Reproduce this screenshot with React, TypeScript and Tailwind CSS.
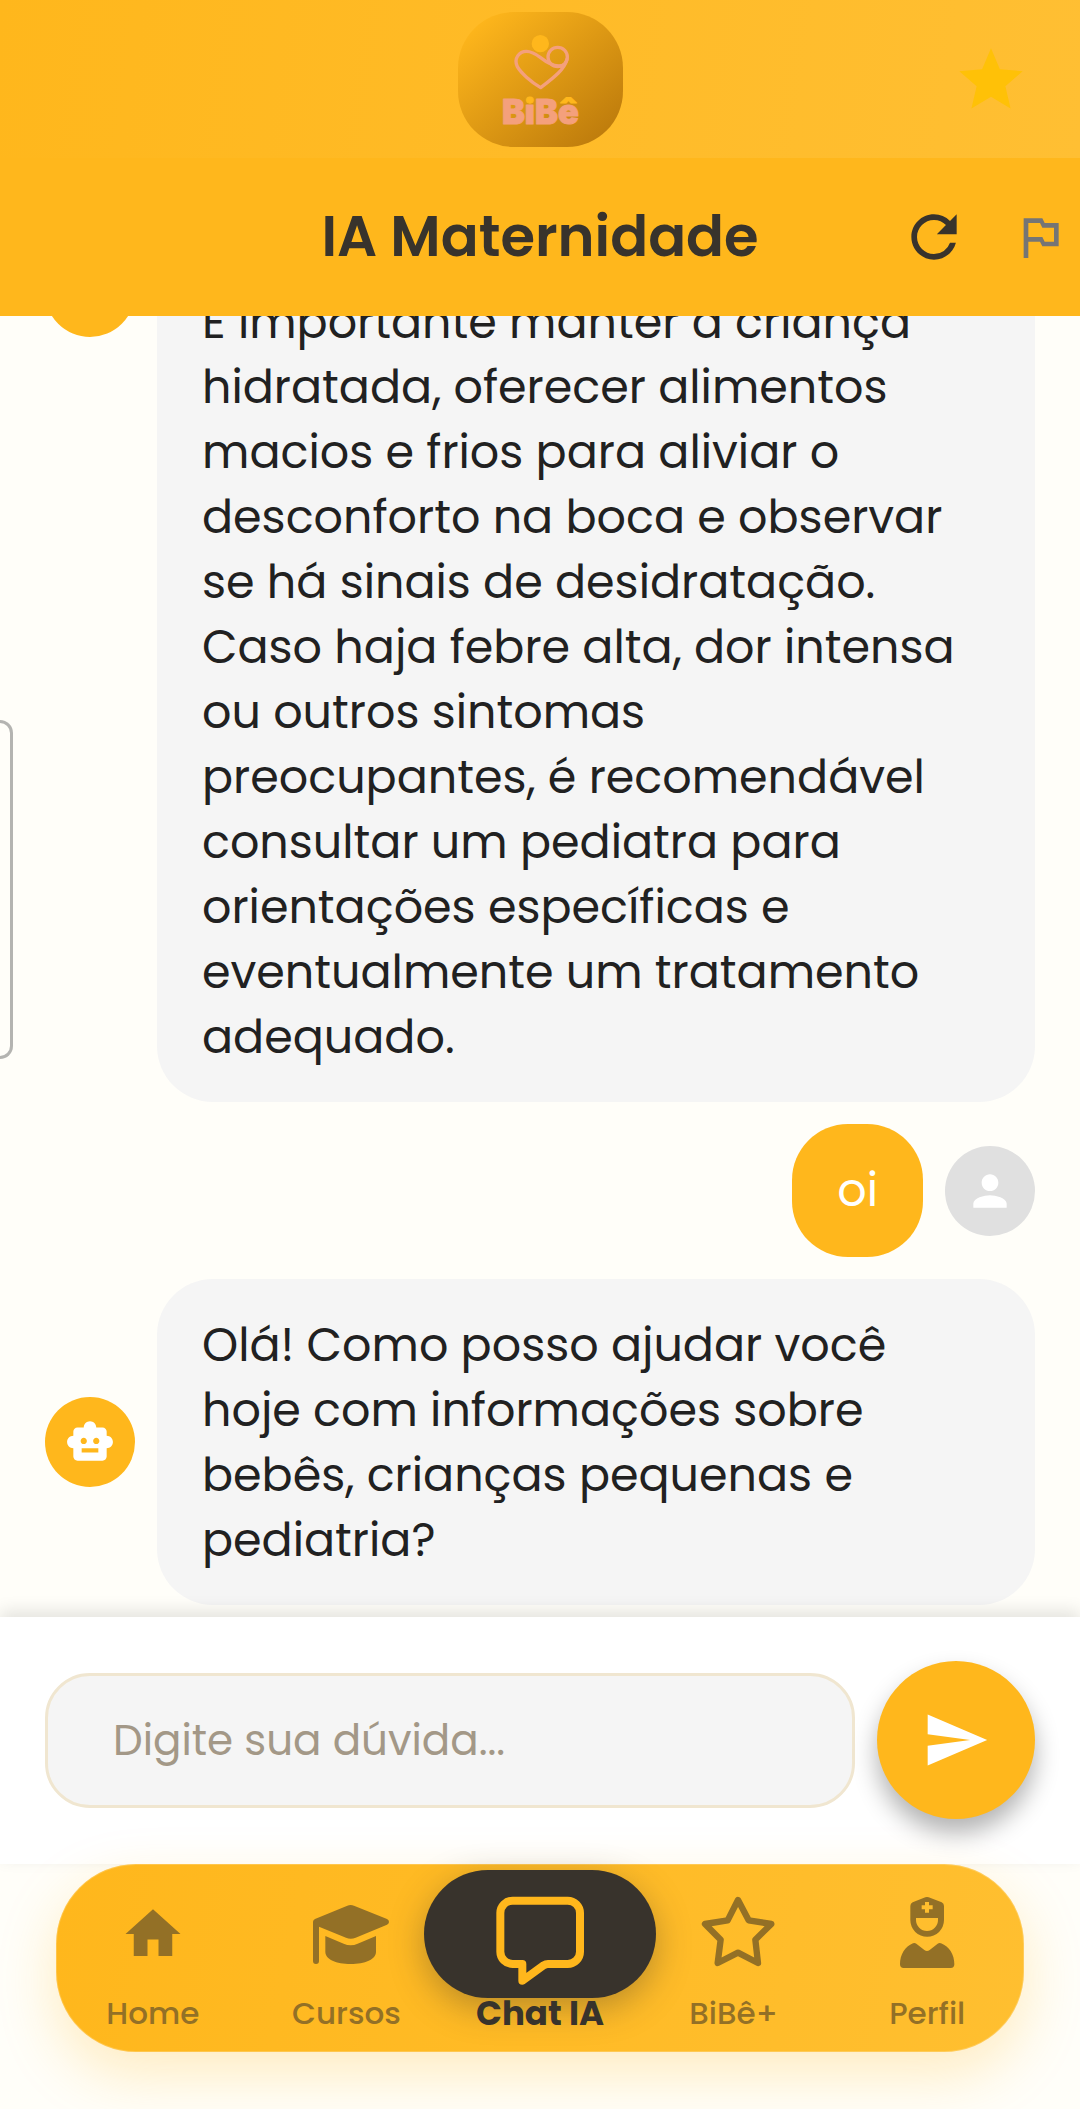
import { useState } from 'react';
import type { FormEvent, ReactNode } from 'react';
import { MdHome, MdOutlinedFlag, MdPerson, MdRefresh, MdSend, MdSmartToy, MdStar } from 'react-icons/md';

type Message = {
  id: number;
  from: 'bot' | 'user';
  text: string;
  scrolled?: boolean;
};

const MESSAGES: Message[] = [
  {
    id: 1,
    from: 'bot',
    scrolled: true,
    text: [
      'É importante manter a criança',
      'hidratada, oferecer alimentos',
      'macios e frios para aliviar o',
      'desconforto na boca e observar',
      'se há sinais de desidratação.',
      'Caso haja febre alta, dor intensa',
      'ou outros sintomas',
      'preocupantes, é recomendável',
      'consultar um pediatra para',
      'orientações específicas e',
      'eventualmente um tratamento',
      'adequado.',
    ].join('\n'),
  },
  { id: 2, from: 'user', text: 'oi' },
  {
    id: 3,
    from: 'bot',
    text: [
      'Olá! Como posso ajudar você',
      'hoje com informações sobre',
      'bebês, crianças pequenas e',
      'pediatria?',
    ].join('\n'),
  },
];

function Logo() {
  return (
    <svg className="w-[165px] h-[135px]" viewBox="52 36 495 405" role="img" aria-label="BiBê">
      <defs>
        <linearGradient id="logoBg" x1="0" y1="0" x2="1" y2="1">
          <stop offset="0.08" stopColor="#FFB71C" />
          <stop offset="0.92" stopColor="#BD7B0C" />
        </linearGradient>
        {/* accents in yellow, letter body in salmon */}
        <linearGradient id="accent" gradientUnits="userSpaceOnUse" x1="0" y1="280" x2="0" y2="380">
          <stop offset="0.32" stopColor="#FFB71C" />
          <stop offset="0.32" stopColor="#F4A07C" />
        </linearGradient>
      </defs>
      <rect x="52" y="36" width="495" height="405" rx="168" fill="url(#logoBg)" />
      <circle cx="299" cy="131" r="26" fill="#FFB71C" />
      <g fill="none" stroke="#F4A07C" strokeWidth="10" strokeLinecap="round" strokeLinejoin="round">
        <circle cx="351" cy="171" r="29" />
        <path d="M379 178C372 207 343 230 300 263C270 245 240 218 230 200C218 175 236 154 257 154C285 154 298 176 326 190C344 199 362 200 373 193" />
      </g>
      <text
        x="299"
        y="372"
        textAnchor="middle"
        fontFamily="Inter, 'Liberation Sans', sans-serif"
        fontWeight="900"
        fontSize="103"
        fill="#F4A07C"
        stroke="#F4A07C"
        strokeWidth="3"
        strokeLinejoin="round"
      >
        B<tspan fill="url(#accent)" stroke="url(#accent)">i</tspan>B
        <tspan fill="url(#accent)" stroke="url(#accent)">ê</tspan>
      </text>
    </svg>
  );
}

function CapIcon() {
  return (
    <svg className="size-[110px]" viewBox="873 117 330 330" fill="currentColor" aria-hidden="true">
      <path d="M1042 197Q1052 193 1062 197L1161 237Q1167 240 1167 246Q1167 251 1161 254L1067 293Q1052 299 1038 293L957 260V363Q957 372 948 372Q939 372 939 363V246Q939 240 945 237Z" />
      <path d="M976 288L1031 311Q1052 320 1073 311L1128 288V335C1128 358 1095 372 1052 372C1009 372 976 358 976 335Z" />
    </svg>
  );
}

function ChatIcon() {
  return (
    <svg
      className="size-[110px]"
      viewBox="285 117 330 330"
      fill="none"
      stroke="currentColor"
      strokeWidth="24"
      strokeLinejoin="round"
      aria-hidden="true"
    >
      <path d="M368 372H397V422L461 376Q467 372 474 372H533A37 37 0 0 0 570 335V219A37 37 0 0 0 533 182H368A37 37 0 0 0 331 219V335A37 37 0 0 0 368 372Z" />
    </svg>
  );
}

function StarIcon() {
  return (
    <svg
      className="size-[110px]"
      viewBox="56 117 330 330"
      fill="none"
      stroke="currentColor"
      strokeWidth="19"
      strokeLinejoin="round"
      aria-hidden="true"
    >
      <path d="M233 180L265 241L333 252L285 299L293 369L233 338L172 369L181 299L134 252L202 241Z" />
    </svg>
  );
}

function NurseIcon() {
  return (
    <svg className="size-[110px]" viewBox="636 117 330 330" fill="currentColor" aria-hidden="true">
      <path
        fillRule="evenodd"
        d="M796 172Q801 170 806 172L845 187Q852 190 852 198V240A50.500 50.500 0 0 1 751 240V198Q751 190 758 187ZM768 234V240A33 33 0 0 0 834 240V234ZM795 186V196H785V208H795V218H807V208H818V196H807V186Z"
      />
      <path d="M759 310Q764 307 769 311L793 330Q801 336 809 330L833 311Q838 307 843 310C868 320 883 344 883 373Q883 384 872 384H731Q720 384 720 373C720 344 735 320 759 310Z" />
    </svg>
  );
}

const TABS: { label: string; icon: ReactNode; active?: boolean }[] = [
  { label: 'Home', icon: <MdHome className="size-[66px]" /> },
  { label: 'Cursos', icon: <CapIcon /> },
  { label: 'Chat IA', icon: <ChatIcon />, active: true },
  { label: 'BiBê+', icon: <StarIcon /> },
  { label: 'Perfil', icon: <NurseIcon /> },
];

function MessageRow({ message }: { message: Message }) {
  if (message.from === 'user') {
    return (
      <div className="flex shrink-0 items-center justify-end gap-[22px]">
        <p className="rounded-[56px] bg-[#FFB71C] px-[45px] py-[34px] text-[46px] leading-[65px] text-white">
          {message.text}
        </p>
        <div className="flex size-[90px] shrink-0 items-center justify-center rounded-full bg-[#E0E0E0] text-white">
          <MdPerson className="size-[50px]" />
        </div>
      </div>
    );
  }

  return (
    <div className={`flex shrink-0 gap-[22px] ${message.scrolled ? 'items-start' : 'items-center'}`}>
      <div className="flex size-[90px] shrink-0 items-center justify-center rounded-full bg-[#FFB71C] text-white">
        <MdSmartToy className="size-[50px]" />
      </div>
      <p
        className={`flex-1 whitespace-pre-line rounded-[56px] bg-[#F5F5F5] pl-[45px] pr-5 pb-8 text-[46px] leading-[65px] text-[#212121] ${
          message.scrolled ? 'pt-[43px]' : 'pt-[34px]'
        }`}
      >
        {message.text}
      </p>
    </div>
  );
}

export default function App() {
  const [question, setQuestion] = useState('');

  const handleSubmit = (e: FormEvent) => {
    e.preventDefault();
    setQuestion('');
  };

  return (
    <div className="relative flex h-screen flex-col overflow-hidden bg-[#FFFEF9] font-['Poppins','Inter','Noto_Sans',sans-serif]">
      <header className="grid grid-cols-3 items-center bg-linear-[98deg] from-[#FFB71C] to-[#FFBF33] pt-3 pb-[11px] pr-[51px]">
        <div className="col-start-2 flex justify-center pl-[51px]">
          <Logo />
        </div>
        <button type="button" aria-label="Favoritos" className="justify-self-end text-[#FFC107]">
          <MdStar className="size-[76px]" />
        </button>
      </header>

      <div className="grid h-[158px] shrink-0 grid-cols-[1fr_auto_1fr] items-center bg-[#FFB71C]">
        <h1 className="col-start-2 text-[56px] font-semibold leading-[80px] text-[#38332C]">IA Maternidade</h1>
        <div className="flex items-center justify-end gap-11 pr-3">
          <button type="button" aria-label="Recarregar" className="text-[#38332C]">
            <MdRefresh className="size-[68px]" />
          </button>
          <button type="button" aria-label="Reportar" className="text-[#757575]">
            <MdOutlinedFlag className="size-[56px]" />
          </button>
        </div>
      </div>

      <main className="flex min-h-0 flex-1 flex-col justify-end gap-[22px] overflow-hidden px-[45px] pb-3">
        {MESSAGES.map((message) => (
          <MessageRow key={message.id} message={message} />
        ))}
      </main>

      {/* Side panel handle */}
      <div className="absolute left-0 top-[720px] h-[339px] w-[13px] rounded-r-[14px] border-3 border-l-0 border-[#B4B4B1]" />

      <form
        onSubmit={handleSubmit}
        className="relative flex shrink-0 items-center gap-[22px] bg-white px-[45px] pt-11 pb-[45px] shadow-[0_-6px_16px_rgba(0,0,0,0.11)]"
      >
        <input
          type="text"
          aria-label="Digite sua dúvida"
          placeholder="Digite sua dúvida..."
          value={question}
          onChange={(e) => setQuestion(e.target.value)}
          className="h-[135px] min-w-0 flex-1 rounded-[45px] border-3 border-[#F0E6D0] bg-[#F5F5F5] px-[65px] text-[42px] text-[#38332C] outline-none placeholder:text-[#A39887]"
        />
        <button
          type="submit"
          aria-label="Enviar"
          className="flex size-[158px] shrink-0 items-center justify-center rounded-full bg-[#FFB71C] text-white shadow-[0_14px_24px_rgba(0,0,0,0.3)]"
        >
          <MdSend className="size-[68px]" />
        </button>
      </form>

      <nav className="relative mx-14 mb-[57px] grid shrink-0 grid-cols-5 rounded-[80px] bg-linear-[101deg] from-[#FFB71C] to-[#FFBF30] pt-[6px] pb-6 shadow-[0_22px_56px_rgba(255,183,28,0.25)] inset-ring-1 inset-ring-white/20">
        {TABS.map((tab) => (
          <a
            key={tab.label}
            href="#"
            aria-current={tab.active ? 'page' : undefined}
            className={`flex flex-col text-center leading-[30px] ${
              tab.active ? 'text-[34px] font-bold text-[#38332C]' : 'text-[31px] font-medium text-[#937026]'
            }`}
          >
            <span
              className={`flex h-32 items-center justify-center ${
                tab.active
                  ? '-mx-[19px] rounded-[64px] bg-[#38332C] text-[#FFB71C] shadow-[0_10px_34px_rgba(56,51,44,0.35)]'
                  : ''
              }`}
            >
              {tab.icon}
            </span>
            <span className="relative">{tab.label}</span>
          </a>
        ))}
      </nav>
    </div>
  );
}
